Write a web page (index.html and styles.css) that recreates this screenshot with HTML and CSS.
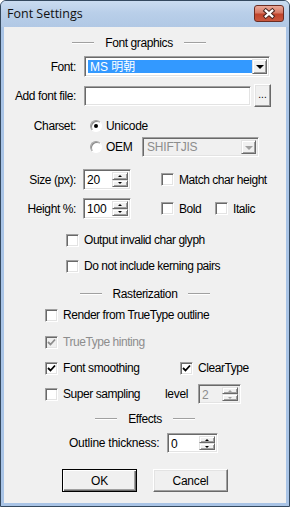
FILE: index.html
```html
<!DOCTYPE html>
<html>
<head>
<meta charset="utf-8">
<title>Font Settings</title>
<link rel="stylesheet" href="styles.css">
</head>
<body>
<div class="window">
  <div class="titlebar">
    <span class="title">Font Settings</span>
    <div class="close">
      <svg width="30" height="17" viewBox="0 0 30 17">
        <path d="M11.5 5.5 L18.5 11.5 M18.5 5.5 L11.5 11.5" stroke="#4a2620" stroke-width="4.6" stroke-linecap="square" fill="none"/>
        <path d="M11.5 5.5 L18.5 11.5 M18.5 5.5 L11.5 11.5" stroke="#ffffff" stroke-width="2.4" stroke-linecap="square" fill="none"/>
      </svg>
    </div>
  </div>
  <div class="client">
    <div class="group g-font"><span class="etch"></span><span class="gtext">Font graphics</span><span class="etch"></span></div>

    <div class="row r-font">
      <span class="lbl">Font:</span>
      <div class="combo font-combo">
        <span class="sel">MS 明朝</span>
        <span class="dropbtn"><i class="tri"></i></span>
      </div>
    </div>

    <div class="row r-file">
      <span class="lbl">Add font file:</span>
      <div class="edit file-edit"></div>
      <div class="btn dots">...</div>
    </div>

    <div class="row r-uni">
      <span class="lbl">Charset:</span>
      <span class="radio on"></span>
      <span class="rtext">Unicode</span>
    </div>

    <div class="row r-oem">
      <span class="lbl"></span>
      <span class="radio"></span>
      <span class="rtext oem">OEM</span>
      <div class="combo dis oem-combo">
        <span class="val">SHIFTJIS</span>
        <span class="dropbtn"><i class="tri"></i></span>
      </div>
    </div>

    <div class="row r-size">
      <span class="lbl">Size (px):</span>
      <div class="spin num">
        <span class="val">20</span>
        <span class="spinbtns"><span class="sb"><i class="up"></i></span><span class="sb"><i class="dn"></i></span></span>
      </div>
      <span class="chk c-match"><span class="box"></span><span class="ctext">Match char height</span></span>
    </div>

    <div class="row r-height">
      <span class="lbl">Height %:</span>
      <div class="spin num">
        <span class="val">100</span>
        <span class="spinbtns"><span class="sb"><i class="up"></i></span><span class="sb"><i class="dn"></i></span></span>
      </div>
      <span class="chk c-bold"><span class="box"></span><span class="ctext">Bold</span></span>
      <span class="chk"><span class="box"></span><span class="ctext">Italic</span></span>
    </div>

    <div class="row r-out ind-66">
      <span class="chk"><span class="box"></span><span class="ctext">Output invalid char glyph</span></span>
    </div>

    <div class="row r-kern ind-66">
      <span class="chk"><span class="box"></span><span class="ctext">Do not include kerning pairs</span></span>
    </div>

    <div class="group g-rast"><span class="etch"></span><span class="gtext">Rasterization</span><span class="etch"></span></div>

    <div class="row r-render ind-45">
      <span class="chk"><span class="box"></span><span class="ctext">Render from TrueType outline</span></span>
    </div>

    <div class="row r-hint ind-45">
      <span class="chk disabled"><span class="box checked"><svg width="9" height="9" viewBox="0 0 9 9"><path d="M1 4 L3.5 6.5 L8 1.5" stroke="#8d8d8d" stroke-width="1.8" fill="none"/></svg></span><span class="ctext">TrueType hinting</span></span>
    </div>

    <div class="row r-smooth ind-45">
      <span class="chk c-smooth"><span class="box checked"><svg width="9" height="9" viewBox="0 0 9 9"><path d="M1 4 L3.5 6.5 L8 1.5" stroke="#000" stroke-width="1.8" fill="none"/></svg></span><span class="ctext">Font smoothing</span></span>
      <span class="chk"><span class="box checked"><svg width="9" height="9" viewBox="0 0 9 9"><path d="M1 4 L3.5 6.5 L8 1.5" stroke="#000" stroke-width="1.8" fill="none"/></svg></span><span class="ctext">ClearType</span></span>
    </div>

    <div class="row r-super ind-45">
      <span class="chk c-super"><span class="box"></span><span class="ctext">Super sampling</span></span>
      <span class="level">level</span>
      <div class="spin dis level-spin">
        <span class="val">2</span>
        <span class="spinbtns"><span class="sb"><i class="up"></i></span><span class="sb"><i class="dn"></i></span></span>
      </div>
    </div>

    <div class="group g-eff"><span class="etch"></span><span class="gtext">Effects</span><span class="etch"></span></div>

    <div class="row r-outline">
      <span class="olabel">Outline thickness:</span>
      <div class="spin outline-spin">
        <span class="val">0</span>
        <span class="spinbtns"><span class="sb"><i class="up"></i></span><span class="sb"><i class="dn"></i></span></span>
      </div>
    </div>

    <div class="row r-btns">
      <div class="btn push default">OK</div>
      <div class="btn push">Cancel</div>
    </div>
  </div>
</div>
</body>
</html>
```

FILE: styles.css
```css
html, body {
  margin: 0;
  padding: 0;
  background: #ffffff;
}

body {
  font-family: "Liberation Sans", Arial, "Noto Sans CJK JP", sans-serif;
  font-size: 12px;
  letter-spacing: -0.45px;
  color: #000;
}

.window {
  width: 290px;
  height: 507px;
  box-sizing: border-box;
  border: 1px solid #34495f;
  border-radius: 6px 6px 0 0;
  background: #a9c4e6;
  display: flex;
  flex-direction: column;
  overflow: hidden;
}

.titlebar {
  height: 26px;
  flex: none;
  display: flex;
  align-items: flex-start;
  justify-content: space-between;
  background: linear-gradient(#cadcf0, #b9cfe9 45%, #b1c8e5);
}

.title {
  font-family: "Open Sans", "Noto Sans", sans-serif;
  font-size: 12.5px;
  letter-spacing: 0;
  color: #111;
  margin: 4px 0 0 6px;
  line-height: 17px;
}

.close {
  width: 30px;
  height: 17px;
  margin: 4px 5px 0 0;
  box-sizing: border-box;
  border: 1px solid #6b2c22;
  border-radius: 3px;
  background: linear-gradient(#e9a898, #d77a66 45%, #c0442c 55%, #c9583f);
  display: flex;
  align-items: center;
  justify-content: center;
}

.close svg {
  display: block;
  margin-top: -1px;
}

.client {
  flex: 1;
  margin: 0 3px 3px 3px;
  background: #f0f0f0;
  display: flex;
  flex-direction: column;
}

/* group headings */
.group {
  display: flex;
  align-items: center;
  justify-content: center;
  height: 14px;
  gap: 11px;
}

.etch {
  width: 22px;
  height: 0;
  border-top: 1px solid #a0a0a0;
  border-bottom: 1px solid #ffffff;
}

.gtext {
  letter-spacing: -0.4px;
}

.g-font { margin-top: 9px; padding-right: 12px; }
.g-rast { margin-top: 14px; }
.g-eff  { margin-top: 8px; }

/* rows */
.row {
  display: flex;
  align-items: center;
}

.lbl {
  width: 72px;
  text-align: right;
  margin-right: 8px;
  flex: none;
  letter-spacing: -0.4px;
}

.r-font   { margin-top: 6px;  height: 21px; }
.r-file   { margin-top: 7px;  height: 23px; }
.r-uni    { margin-top: 12px; height: 14px; }
.r-oem    { margin-top: 4px;  height: 20px; }
.r-size   { margin-top: 12px; height: 21px; }
.r-height { margin-top: 8px;  height: 21px; }
.r-out    { margin-top: 14px; height: 14px; }
.r-kern   { margin-top: 12px; height: 14px; }
.r-render { margin-top: 7px;  height: 14px; }
.r-hint   { margin-top: 13px; height: 14px; }
.r-smooth { margin-top: 12px; height: 14px; }
.r-super  { margin-top: 9px;  height: 20px; }
.r-outline{ margin-top: 7px;  height: 20px; padding-left: 65px; }
.r-btns   { margin-top: 16px; height: 23px; padding-left: 58px; gap: 16px; }

.ind-66 { padding-left: 62px; }
.ind-45 { padding-left: 41px; }

/* sunken controls */
.edit, .combo, .spin, .box {
  box-sizing: border-box;
  border: 1px solid;
  border-color: #a0a0a0 #ffffff #ffffff #a0a0a0;
  box-shadow: inset 1px 1px #696969, inset -1px -1px #e3e3e3;
  background: #ffffff;
}

.combo {
  display: flex;
  align-items: stretch;
  padding: 2px;
}

.font-combo {
  width: 186px;
  height: 21px;
}

.sel {
  flex: 1;
  margin: 1px 0 1px 1px;
  background: #3399ff;
  color: #ffffff;
  padding-left: 2px;
  line-height: 15px;
  letter-spacing: 0;
  font-size: 12px;
}

.dropbtn {
  width: 15px;
  flex: none;
  box-sizing: border-box;
  background: #f0f0f0;
  border: 1px solid;
  border-color: #e3e3e3 #696969 #696969 #e3e3e3;
  box-shadow: inset 1px 1px #ffffff, inset -1px -1px #a0a0a0;
  display: flex;
  align-items: center;
  justify-content: center;
}

.tri {
  width: 0;
  height: 0;
  border-left: 4px solid transparent;
  border-right: 4px solid transparent;
  border-top: 4px solid #000;
  margin-top: 1px;
}

.combo.dis {
  background: #f0f0f0;
  color: #8d8d8d;
}

.combo.dis .tri {
  border-top-color: #a0a0a0;
}

.oem-combo {
  width: 117px;
  height: 20px;
}

.combo .val {
  flex: 1;
  padding-left: 2px;
  line-height: 14px;
  letter-spacing: -0.2px;
}

.file-edit {
  width: 167px;
  height: 20px;
}

/* raised buttons */
.btn {
  box-sizing: border-box;
  background: #f0f0f0;
  border: 1px solid;
  border-color: #ffffff #696969 #696969 #ffffff;
  box-shadow: inset -1px -1px #a0a0a0, inset 1px 1px #e3e3e3;
  display: flex;
  align-items: center;
  justify-content: center;
}

.dots {
  width: 17px;
  height: 23px;
  margin-left: 3px;
  padding-bottom: 3px;
  letter-spacing: 0;
  font-size: 10px;
}

.push {
  width: 75px;
  height: 23px;
  font-size: 12px;
  letter-spacing: -0.2px;
}

.push.default {
  border: 1px solid #000;
  box-shadow: inset 1px 1px #ffffff, inset -1px -1px #696969, inset -2px -2px #a0a0a0;
}

/* radios */
.radio {
  width: 12px;
  height: 12px;
  box-sizing: border-box;
  border-radius: 50%;
  border: 1px solid;
  border-color: #a0a0a0 #ffffff #ffffff #a0a0a0;
  box-shadow: inset 1px 1px #8a8a8a;
  background: #ffffff;
  margin-left: 6px;
  flex: none;
  display: flex;
  align-items: center;
  justify-content: center;
}

.radio.on::after {
  content: "";
  width: 4px;
  height: 4px;
  border-radius: 50%;
  background: #000;
}

.rtext {
  margin-left: 4px;
  font-size: 12px;
  letter-spacing: -0.3px;
}

.rtext.oem {
  width: 36px;
}

/* spin edits */
.spin {
  display: flex;
  align-items: stretch;
  padding: 2px;
}

.spin .val {
  flex: 1;
  padding-left: 1px;
  line-height: 16px;
  font-size: 12px;
  letter-spacing: -0.2px;
}

.num {
  width: 48px;
  height: 21px;
  margin-left: -1px;
}

.spinbtns {
  width: 16px;
  display: flex;
  flex-direction: column;
  flex: none;
}

.sb {
  flex: 1;
  box-sizing: border-box;
  background: #f0f0f0;
  border: 1px solid;
  border-color: #e3e3e3 #696969 #696969 #e3e3e3;
  box-shadow: inset 1px 1px #ffffff, inset -1px -1px #a0a0a0;
  display: flex;
  align-items: center;
  justify-content: center;
}

.sb .up {
  width: 0; height: 0;
  border-left: 2px solid transparent;
  border-right: 2px solid transparent;
  border-bottom: 2px solid #000;
}

.sb .dn {
  width: 0; height: 0;
  border-left: 2px solid transparent;
  border-right: 2px solid transparent;
  border-top: 2px solid #000;
}

.spin.dis {
  background: #f0f0f0;
  color: #8d8d8d;
}

.spin.dis .up { border-bottom-color: #a0a0a0; }
.spin.dis .dn { border-top-color: #a0a0a0; }

.level-spin {
  width: 43px;
  height: 20px;
}

.outline-spin {
  width: 51px;
  height: 20px;
}

.level {
  width: 33px;
  font-size: 12px;
  letter-spacing: -0.3px;
}

.olabel {
  width: 98px;
  font-size: 12px;
  letter-spacing: -0.25px;
}

/* checkboxes */
.chk {
  display: flex;
  align-items: center;
  flex: none;
}

.box {
  width: 13px;
  height: 13px;
  flex: none;
  display: flex;
  align-items: center;
  justify-content: center;
}

.box svg { display: block; }

.ctext {
  margin-left: 5px;
  font-size: 12px;
  letter-spacing: -0.45px;
}

.chk.disabled .box { background: #f0f0f0; }
.chk.disabled .ctext { color: #8d8d8d; }

.c-match { margin-left: 30px; }
.c-bold  { margin-left: 30px; width: 54px; }
.c-smooth { width: 135px; }
.c-super  { width: 120px; }
```
